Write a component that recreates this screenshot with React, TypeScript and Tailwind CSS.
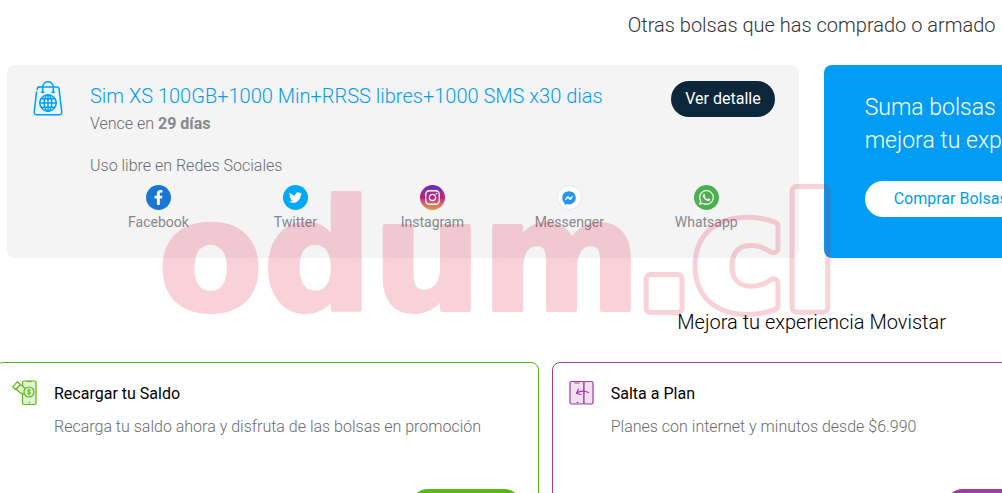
import React from "react";
import type { IconType } from "react-icons";
import { FaFacebookF, FaFacebookMessenger, FaInstagram, FaTwitter, FaWhatsapp } from "react-icons/fa";

type Network = { name: string; Icon: IconType; circle: string; icon: string };

const networks: Network[] = [
  { name: "Facebook", Icon: FaFacebookF, circle: "bg-[#1976d2] text-white", icon: "size-[15px]" },
  { name: "Twitter", Icon: FaTwitter, circle: "bg-[#03a9f4] text-white", icon: "size-[13px]" },
  {
    name: "Instagram",
    Icon: FaInstagram,
    circle: "bg-linear-to-b from-[#6a1fc4] via-[#c2187c] to-[#e59a3c] text-white",
    icon: "size-[17px]",
  },
  {
    name: "Messenger",
    Icon: FaFacebookMessenger,
    circle: "bg-white border border-gray-200 text-[#2196f3]",
    icon: "size-[14px]",
  },
  { name: "Whatsapp", Icon: FaWhatsapp, circle: "bg-[#4caf50] text-white", icon: "size-[17px]" },
];

const BagIcon = () => (
  <svg viewBox="0 0 30 36" className="h-9 w-[30px]" fill="none" stroke="#019df4" strokeWidth="1.5" strokeLinecap="round">
    <path
      d="M5.500 6H24a2 2 0 0 1 2 1.700l2.800 23.300a2.500 2.500 0 0 1-2.500 2.800H3.700a2.500 2.500 0 0 1-2.500-2.800L3.500 11"
      fill="#e6f5fe"
    />
    <path d="M4.200 8.500c.1-1.500.6-2.500 1.800-2.500" />
    <path d="M9.700 11V6a5.300 5.300 0 0 1 10.600 0v5M8.500 11.200h2.400M19 11.200h2.400" />
    <circle cx="15" cy="22" r="8.200" />
    <ellipse cx="15" cy="22" rx="3.800" ry="8.200" />
    <path d="M15 13.800v16.400M6.800 22h16.400M8.300 17.800h13.400M8.300 26.200h13.400" />
  </svg>
);

const RechargeIcon = () => (
  <svg viewBox="0 0 26 26" className="size-[26px]" fill="#e1f3d5" stroke="#5cb615" strokeWidth="1.200" strokeLinejoin="round" strokeLinecap="round">
    <rect x="10.500" y="1" width="13.500" height="23.500" rx="1.500" />
    <path d="M15 1.500h4.500M17.300 22v.8" />
    <path d="M6.500 4.500 3 8.500l5.500 4.500 5 1.500 4-6-5-.5-2.500-2.500z" />
    <path d="m.700 6.800 4.600-5 3 2.700-4.500 5z" fill="#fff" />
    <circle cx="17" cy="12" r="5" />
    <path d="M18.600 10.300c-.8-.8-3-.7-3 .5 0 1.400 3 .9 3 2.300 0 1.300-2.300 1.300-3.200.4M17 8.900v6.200" fill="none" strokeWidth="1" />
  </svg>
);

const SwapIcon = () => (
  <svg viewBox="0 0 26 26" className="size-[26px]" fill="#f1e0f0" stroke="#a13ba1" strokeWidth="1.200" strokeLinejoin="round" strokeLinecap="round">
    <rect x="1" y="1.500" width="14" height="22.500" rx="1.500" />
    <rect x="15" y="1.500" width="9" height="22.500" rx="1.500" />
    <path d="M6 3h4M8 22.300h1" />
    <path d="m9.500 9-2 4.500 4.500 1M7.500 13c4-2.500 8-2.500 12-.5" fill="none" />
  </svg>
);

const Watermark = () => (
  <svg
    aria-hidden="true"
    viewBox="0 0 700 180"
    className="pointer-events-none absolute top-[160px] left-[155px] h-[180px] w-[700px] font-['DejaVu_Sans',sans-serif] text-[153px] font-bold opacity-20"
    strokeLinejoin="round"
  >
    {/* keeps only the outer ring of the domain ending */}
    <mask id="ring" maskUnits="userSpaceOnUse" x="0" y="0" width="700" height="180">
      <rect width="700" height="180" fill="#fff" />
      <text x="480" y="148" fill="#000" stroke="#000" strokeWidth="4">
        .cl
      </text>
    </mask>
    <text x="3" y="150" fill="#e11d48" stroke="#e11d48" strokeWidth="4">
      odum
    </text>
    <text x="480" y="148" fill="#e11d48" stroke="#e11d48" strokeWidth="14" mask="url(#ring)">
      .cl
    </text>
  </svg>
);

type OfferProps = {
  title: string;
  text: string;
  icon: React.ReactNode;
  border: string;
  button: string;
  action: string;
};

const OfferCard = ({ title, text, icon, border, button, action }: OfferProps) => (
  <article className={`flex flex-col rounded-lg border bg-white px-4 pt-[17px] pb-5 ${border}`}>
    <div className="flex gap-4">
      <div className="shrink-0">{icon}</div>
      <div>
        <h3 className="text-base leading-7 text-black">{title}</h3>
        <p className="mt-[7px] text-base leading-6 font-light text-[#696b70]">{text}</p>
      </div>
    </div>
    <button type="button" aria-label={action} className={`mt-[50px] h-9 self-end rounded-full ${button}`} />
  </article>
);

const App: React.FC = () => {
  return (
    <main className="relative h-screen overflow-hidden bg-white font-[Roboto,sans-serif]">
      <div className="w-[162%]">
        <h2 className="pt-[9px] text-center text-xl leading-8 font-light text-[#313235]">
          Otras bolsas que has comprado o armado
        </h2>

        <section className="mt-6 ml-[7px] grid w-[74.7%] grid-cols-[2fr_1fr] gap-[25px]">
          <article className="flex rounded-lg bg-[#f4f4f4] pt-4 pr-6 pb-[26px] pl-[26px]">
            <div className="w-[57px] shrink-0">
              <BagIcon />
            </div>
            <div className="flex-1">
              <div className="flex items-start justify-between">
                <div>
                  <h3 className="text-xl leading-[31px] font-light text-[#019df4]">
                    Sim XS 100GB+1000 Min+RRSS libres+1000 SMS x30 dias
                  </h3>
                  <p className="text-base leading-6 font-light text-[#696b70]">
                    Vence en <strong className="font-bold text-[#86888c]">29 días</strong>
                  </p>
                </div>
                <button type="button" className="h-9 rounded-full bg-[#0b2739] px-[14px] text-base text-white">
                  Ver detalle
                </button>
              </div>
              <p className="mt-[18px] text-base leading-6 font-light text-[#696b70]">Uso libre en Redes Sociales</p>
              <ul className="mt-[7px] grid grid-cols-5">
                {networks.map(({ name, Icon, circle, icon }) => (
                  <li key={name} className="flex flex-col items-center">
                    <span className={`flex size-[25px] items-center justify-center rounded-full ${circle}`}>
                      <Icon className={icon} />
                    </span>
                    <span className="mt-0.5 text-sm leading-5 text-[#86888c]">{name}</span>
                  </li>
                ))}
              </ul>
            </div>
          </article>

          <article className="rounded-lg bg-[#019df4] px-[41px] pt-[26px]">
            <h3 className="text-[23px] leading-[33px] font-light text-white">
              Suma bolsas y<br />
              mejora tu experiencia
            </h3>
            <button type="button" className="mt-6 h-9 rounded-full bg-white px-[29px] text-base text-[#019df4]">
              Comprar Bolsas
            </button>
          </article>
        </section>

        <h2 className="mt-12 text-center text-xl leading-8 font-light text-black">Mejora tu experiencia Movistar</h2>

        <section className="mt-6 -ml-[5px] grid w-[67.8%] grid-cols-2 gap-[13px]">
          <OfferCard
            title="Recargar tu Saldo"
            text="Recarga tu saldo ahora y disfruta de las bolsas en promoción"
            icon={<RechargeIcon />}
            border="border-[#5cb615]"
            button="w-28 bg-[#5cb615]"
            action="Recargar"
          />
          <OfferCard
            title="Salta a Plan"
            text="Planes con internet y minutos desde $6.990"
            icon={<SwapIcon />}
            border="border-[#a13ba1]"
            button="w-[134px] bg-[#a13ba1]"
            action="Ver planes"
          />
        </section>
      </div>
      <Watermark />
    </main>
  );
};

export default App;
